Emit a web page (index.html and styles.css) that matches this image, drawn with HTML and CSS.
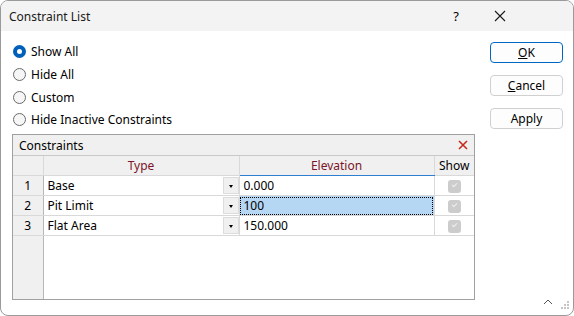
FILE: index.html
```html
<!DOCTYPE html>
<html>
<head>
  <title>Constraint List</title>
  <link rel="stylesheet" href="styles.css">
</head>
<body>
  <div class="window">
    <div class="titlebar">
      <span class="title">Constraint List</span>
      <span class="help">?</span>
      <span class="close">
        <svg width="12" height="12" viewBox="0 0 12 12"><path d="M1 1 L11 11 M11 1 L1 11" stroke="#1a1a1a" stroke-width="1.1" fill="none"/></svg>
      </span>
    </div>

    <div class="content">
      <div class="main">
        <div class="options">
          <label class="radio checked"><span class="dot"></span>Show All</label>
          <label class="radio"><span class="dot"></span>Hide All</label>
          <label class="radio"><span class="dot"></span>Custom</label>
          <label class="radio last"><span class="dot"></span>Hide Inactive Constraints</label>
        </div>

        <div class="panel">
          <div class="panel-head">
            <span>Constraints</span>
            <svg width="10" height="10" viewBox="0 0 10 10"><path d="M1 1 L9 9 M9 1 L1 9" stroke="#c42b1c" stroke-width="1.6" fill="none"/></svg>
          </div>
          <table class="grid">
            <colgroup>
              <col class="c-num">
              <col class="c-type">
              <col class="c-elev">
              <col class="c-show">
            </colgroup>
            <thead>
              <tr>
                <th class="num"></th>
                <th class="field">Type</th>
                <th class="field sorted">Elevation</th>
                <th>Show</th>
              </tr>
            </thead>
            <tbody>
              <tr>
                <td class="num">1</td>
                <td class="type"><span>Base</span><span class="drop"></span></td>
                <td class="elev">0.000</td>
                <td class="show"><span class="check"></span></td>
              </tr>
              <tr>
                <td class="num">2</td>
                <td class="type current"><span>Pit Limit</span><span class="drop"></span></td>
                <td class="elev selected"><span>100</span></td>
                <td class="show"><span class="check"></span></td>
              </tr>
              <tr>
                <td class="num">3</td>
                <td class="type"><span>Flat Area</span><span class="drop"></span></td>
                <td class="elev">150.000</td>
                <td class="show"><span class="check"></span></td>
              </tr>
              <tr class="filler">
                <td class="num"></td>
                <td colspan="3"></td>
              </tr>
            </tbody>
          </table>
        </div>
      </div>

      <div class="buttons">
        <button class="default"><u>O</u>K</button>
        <button><u>C</u>ancel</button>
        <button>Apply</button>
      </div>
    </div>

    <div class="grip">
      <svg width="30" height="14" viewBox="0 0 30 14">
        <path d="M2 8 L6 4 L10 8" stroke="#555" stroke-width="1" fill="none"/>
        <rect x="25" y="5" width="2" height="2" fill="#c4c4c4"/>
        <rect x="22" y="8" width="2" height="2" fill="#c4c4c4"/>
        <rect x="25" y="8" width="2" height="2" fill="#c4c4c4"/>
        <rect x="19" y="11" width="2" height="2" fill="#c4c4c4"/>
        <rect x="22" y="11" width="2" height="2" fill="#c4c4c4"/>
        <rect x="25" y="11" width="2" height="2" fill="#c4c4c4"/>
      </svg>
    </div>
  </div>
</body>
</html>
```

FILE: styles.css
```css
html, body {
  margin: 0;
  padding: 0;
  background: #ffffff;
}

body {
  font-family: "Noto Sans", "Open Sans", sans-serif;
  font-size: 12px;
  color: #000;
}

.window {
  position: relative;
  width: 574px;
  height: 316px;
  box-sizing: border-box;
  border: 1px solid #9a9a9a;
  border-radius: 8px;
  background: #fff;
  overflow: hidden;
}

/* title bar */

.titlebar {
  height: 30px;
  background: #f3f3f3;
  display: flex;
  align-items: center;
  padding-left: 8px;
}

.title {
  flex: 1;
  color: #1a1a1a;
}

.help {
  width: 40px;
  text-align: center;
  font-size: 13px;
  margin-right: 2px;
}

.close {
  width: 44px;
  display: flex;
  justify-content: center;
  margin-right: 51px;
}

/* body */

.content {
  display: flex;
  padding: 9px 9px 0 11px;
}

.main {
  width: 463px;
}

.options {
  display: flex;
  flex-direction: column;
  padding-left: 1px;
}

.radio {
  display: flex;
  align-items: center;
  height: 23px;
  color: #000;
}

.radio.last {
  height: 21px;
}

.radio .dot {
  width: 11px;
  height: 11px;
  border: 1px solid #6a6a6a;
  border-radius: 50%;
  background: #f6f6f6;
  margin-right: 5px;
  box-sizing: content-box;
}

.radio.checked .dot {
  width: 5px;
  height: 5px;
  border: 4px solid #005fb8;
  background: #fff;
}

/* constraints grid */

.panel {
  margin-top: 4px;
  border: 1px solid #a0a0a0;
  width: 461px;
}

.panel-head {
  height: 20px;
  background: #f0f0f0;
  border-bottom: 1px solid #c8c8c8;
  display: flex;
  align-items: center;
  justify-content: space-between;
  padding: 0 6px 0 6px;
}

.grid {
  width: 100%;
  border-collapse: collapse;
  table-layout: fixed;
}

.c-num { width: 30px; }
.c-type { width: 196px; }
.c-elev { width: 195px; }
.c-show { width: 40px; }

.grid th,
.grid td {
  height: 19px;
  padding: 0;
  border: 1px solid #d9d9d9;
  font-weight: normal;
  white-space: nowrap;
}

.grid tr > :first-child { border-left: none; }
.grid tr > :last-child { border-right: none; }
.grid thead th { border-top: none; }

.grid th {
  background: #f0f0f0;
  text-align: center;
}

.grid th.field {
  color: #7b1428;
}

.grid th.sorted {
  border-bottom: 1px solid #2f7fd1;
}

.grid td.num {
  background: #f0f0f0;
  text-align: center;
  border-right-color: #b8b8b8;
}

.grid td.type {
  position: relative;
  padding-left: 4px;
}

.grid td.type.current {
  border-left: 1px solid #4a8fd8;
}

.drop {
  position: absolute;
  right: 0;
  top: 1px;
  bottom: 1px;
  width: 16px;
  background: #f0f0f0;
  border: 1px solid #dcdcdc;
  box-sizing: border-box;
}

.drop::after {
  content: "";
  position: absolute;
  left: 5px;
  top: 7px;
  border-left: 2.5px solid transparent;
  border-right: 2.5px solid transparent;
  border-top: 3px solid #000;
}

.grid td.elev {
  padding-left: 4px;
}

.grid td.selected {
  background: #b6d7f4;
  outline: 1px dotted #000;
  outline-offset: -2px;
}

.grid td.show {
  text-align: center;
}

.check {
  display: inline-block;
  width: 13px;
  height: 13px;
  border-radius: 3px;
  background: #cccccc;
  vertical-align: middle;
  position: relative;
}

.check::after {
  content: "";
  position: absolute;
  left: 4px;
  top: 3px;
  width: 4px;
  height: 2px;
  border-left: 1px solid #eee;
  border-bottom: 1px solid #eee;
  transform: rotate(-45deg);
}

.grid tr.filler td {
  height: 63px;
  border-bottom: none;
}

/* buttons */

.buttons {
  display: flex;
  flex-direction: column;
  gap: 12px;
  margin-left: auto;
  margin-top: 2px;
  margin-right: 1px;
}

.buttons button {
  width: 73px;
  height: 21px;
  font-family: inherit;
  font-size: 12px;
  background: #fdfdfd;
  border: 1px solid #d0d0d0;
  border-radius: 4px;
  padding: 0;
  color: #000;
}

.buttons button.default {
  border-color: #0067c0;
}

.grip {
  position: absolute;
  right: 1px;
  bottom: 1px;
}
```
